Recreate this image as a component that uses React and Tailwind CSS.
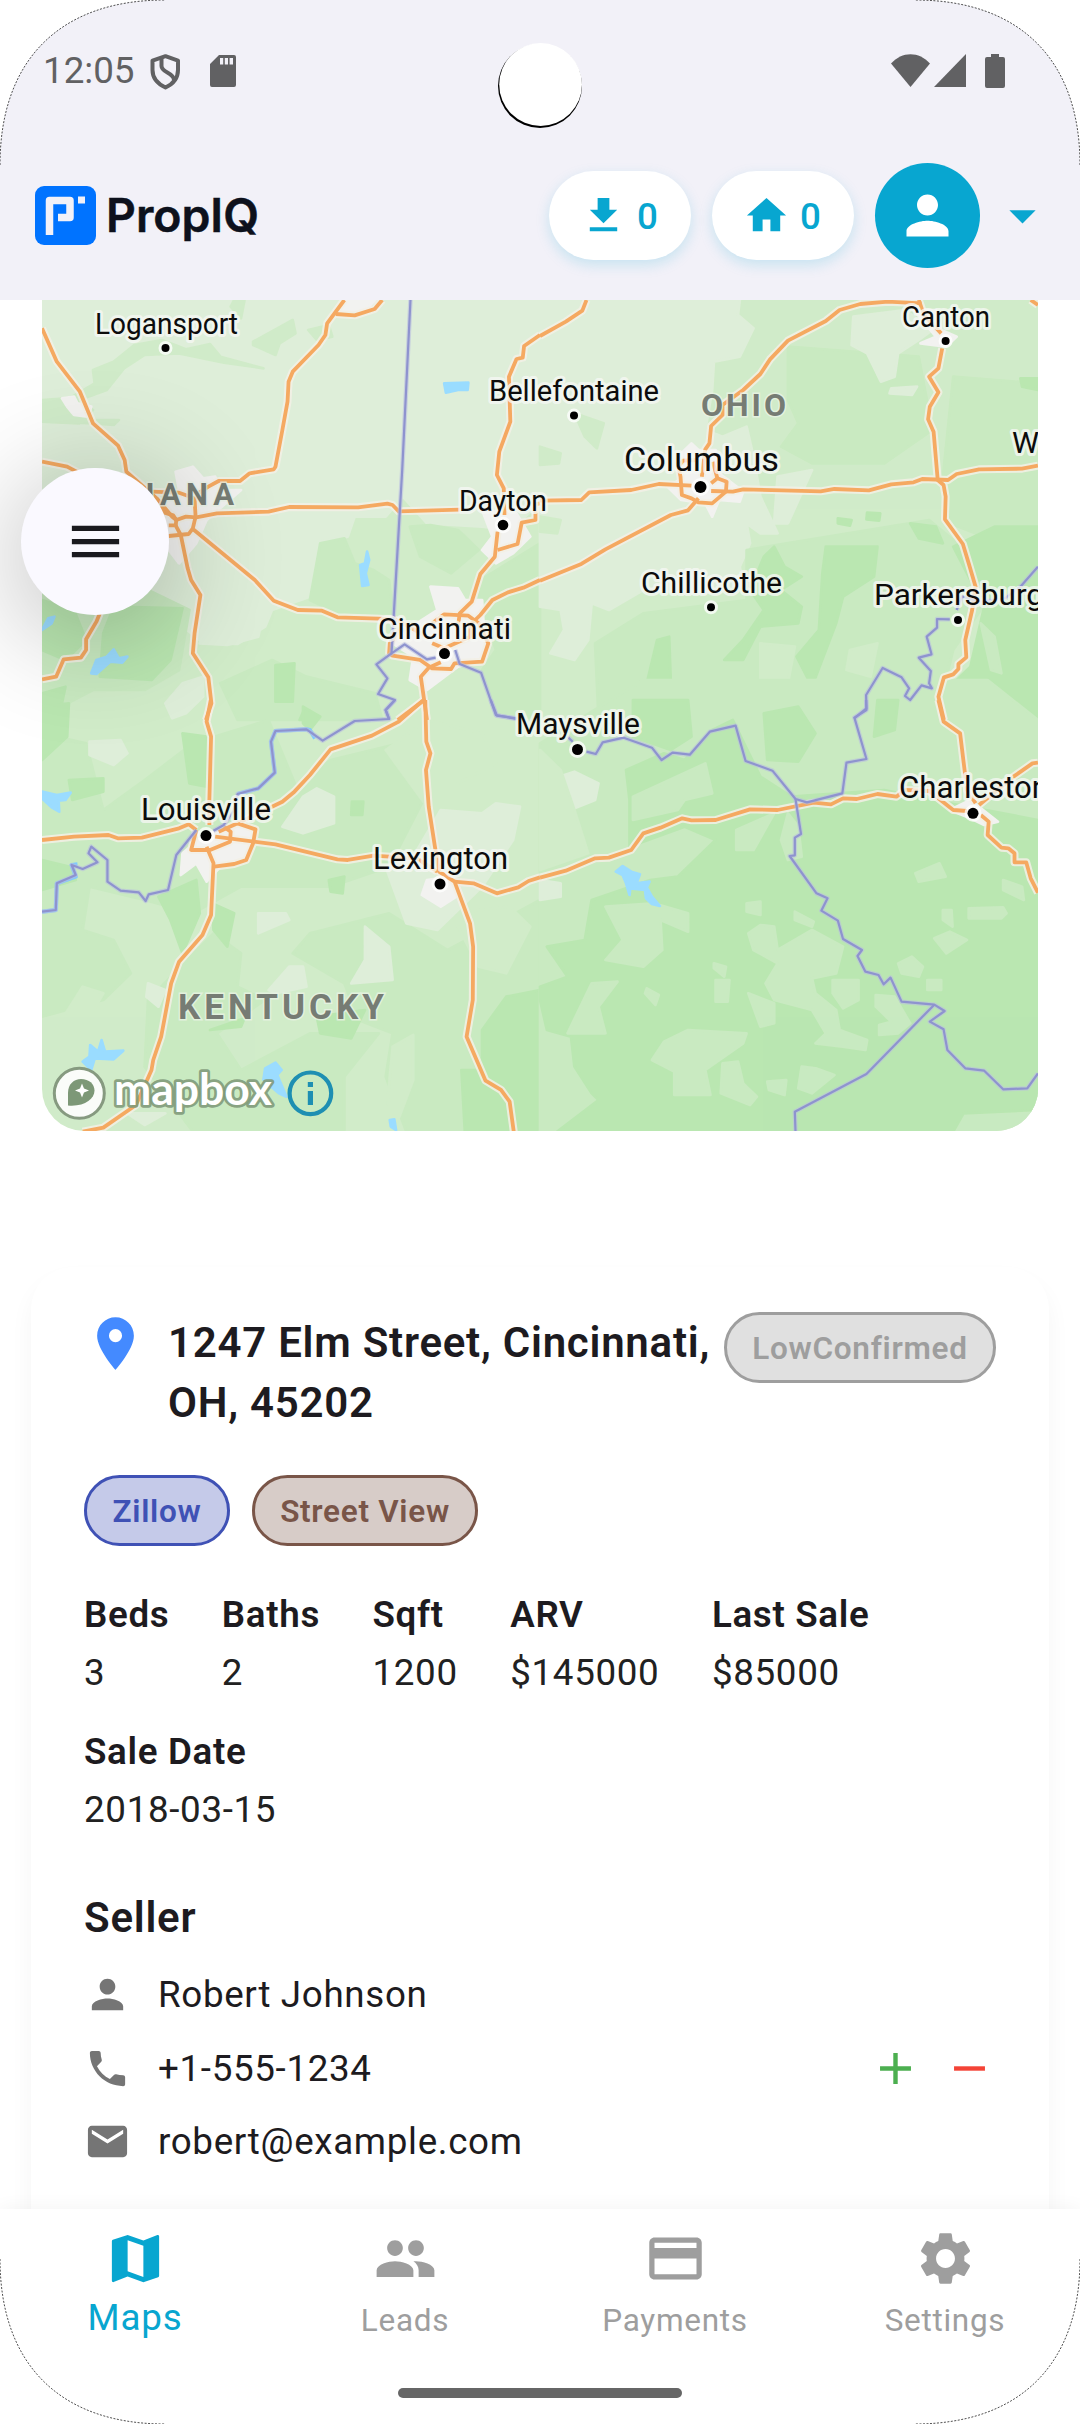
import React from "react";
import {
  MdPerson,
  MdHome,
  MdArrowDropDown,
  MdMenu,
  MdLocationOn,
  MdPhone,
  MdEmail,
  MdAdd,
  MdRemove,
  MdMap,
  MdPeople,
  MdPayment,
  MdSettings,
} from "react-icons/md";

const LIGHT = "#deeed9";
const MID = "#c9eac1";
const DARK = "#bae7b1";
const URBAN = "#f2f2f0";
const WATER = "#9bdcff";

// The map is stored as four tiles, each with its own local grid.
const tiles = [
  {
    transform: "translate(0 290) scale(0.34435 0.33333)",
    land: [
      [LIGHT, "100,20 1568,20 1568,640 1480,720 1400,710 1240,700 1170,620 1120,680 1030,680 1010,740 930,755 900,920 790,960 770,1010 690,1062 590,1060 520,1000 430,880 300,900 100,820"],
      ["#d1ecc9", "270,240 330,215 390,165 470,150 540,178 610,162 640,200 765,235 650,218 520,190 420,195 360,235 310,300 230,330 270,360 230,400 122,395 122,340 210,320 275,280"],
      ["#d1ecc9", "735,155 850,90 858,130 812,160 800,195 735,165"],
      ["#d1ecc9", "680,30 710,30 700,85 670,50"],
      ["#d1ecc9", "895,120 955,105 965,140 920,150"],
      ["#d1ecc9", "122,330 190,325 270,390 345,390 330,405 270,400 150,395"],
      [MID, "930,760 1000,745 1030,820 1085,840 1130,870 1140,970 980,970 900,930"],
      [MID, "1190,710 1250,705 1330,720 1390,780 1310,850 1220,800"],
      [MID, "1380,880 1568,760 1568,1290 1440,1270 1400,1140 1440,1080"],
      [MID, "640,1180 790,1110 890,1160 1090,1210 1110,1290 690,1290"],
      [MID, "122,860 250,900 430,900 550,960 520,1140 420,1200 270,1200 122,1280"],
      [DARK, "330,950 530,955 495,1110 440,1170 290,1160 300,1030"],
      [DARK, "122,930 215,960 250,1050 190,1110 122,1080"],
      [DARK, "800,1125 855,1120 850,1235 800,1235"],
      [DARK, "122,1210 190,1190 170,1290 122,1290"],
      [DARK, "885,1255 920,1290 870,1290"],
      [LIGHT, "480,1240 530,1180 590,1160 590,1220 540,1270 500,1285"],
      [LIGHT, "600,1000 760,990 750,1040 660,1065 580,1060"],
      [URBAN, "180,325 215,320 225,340 265,350 255,380 215,375 195,350"],
      [URBAN, "510,545 560,530 590,565 625,560 640,600 700,600 600,690 570,760 520,820 490,780 450,640 520,600"],
      [URBAN, "1400,660 1500,670 1540,740 1490,790 1440,820 1400,780 1430,740"],
      [URBAN, "1250,890 1330,895 1350,930 1400,930 1410,1100 1330,1130 1240,1200 1190,1170 1200,1100 1140,1060 1210,1000 1270,960"],
      [URBAN, "1000,30 1090,30 1060,62 985,62"],
      [WATER, "1290,280 1360,278 1358,300 1330,300 1295,308"],
      [WATER, "1066,785 1072,810 1062,850 1070,885 1052,888 1046,825 1060,820"],
      [WATER, "265,1150 280,1110 310,1100 330,1078 345,1105 370,1100 355,1118 320,1115 280,1152"],
      [WATER, "122,1020 140,985 158,980 150,1000"],
    ],
    roads: [
      "122,115 165,215 232,305 270,400 343,467 362,510 367,545 455,625 500,680 512,690",
      "122,515 195,530 240,555",
      "1000,30 950,100 945,135 925,165 850,245 838,275 835,335 820,420 800,530 795,538 725,550 697,573 635,573 605,590 575,610",
      "975,72 1030,76 1088,57 1110,30",
      "440,605 520,608 565,625 568,680 560,715 548,732 490,738",
      "490,706 510,706 525,735",
      "465,650 478,668 503,676 512,690 540,680 570,682 630,670 780,665 840,651 1040,652 1125,641 1140,645 1158,664 1335,659",
      "512,690 510,710",
      "560,717 740,870 795,932 865,960 935,962 980,982 1100,986 1150,990 1205,1020 1240,1040",
      "525,735 545,835 555,870 582,915 565,1030 560,1090 605,1162 614,1240 598,1290",
      "290,970 280,995 250,1048 250,1080 235,1103 185,1108 163,1160 122,1168",
      "1568,135 1522,168 1518,203 1500,207 1478,260 1482,395 1450,485 1443,555 1463,595 1465,675",
      "1445,725 1437,800 1395,852 1370,935 1335,970 1330,1010",
      "1568,640 1555,643 1555,690 1515,698 1503,762 1445,780",
      "1568,870 1520,893 1475,907 1430,930 1395,975 1360,1010",
      "1255,1000 1290,973 1360,977 1390,1000 1418,1060 1400,1115 1320,1120 1310,1137 1255,1135 1220,1110 1140,1097 1130,1090 1132,1060 1160,1020",
      "1255,1060 1290,1075 1365,1040 1365,1000",
      "1280,1117 1245,1133 1222,1160 1240,1290",
      "1225,1235 1155,1290",
    ],
    borders: [
      "1192,30 1168,540 1137,1090 1175,1063 1240,1108 1265,1103",
      "1137,1090 1093,1123 1125,1165 1098,1212 1147,1230 1120,1260 1130,1288",
      "1322,1080 1335,1122 1397,1148 1440,1275 1500,1287",
    ],
    rivers: [],
  },
  {
    transform: "translate(540 290) scale(0.34435 0.33333)",
    land: [
      [LIGHT, "0,30 580,30 575,75 620,115 580,200 505,215 500,300 480,420 530,440 600,410 620,500 640,620 690,730 640,730 600,700 610,760 580,830 590,880 480,910 300,900 200,960 150,940 140,1050 100,1110 30,1090 70,1020 60,960 0,950"],
      [MID, "720,170 1100,200 1140,420 1000,520 790,520 700,470 750,400 720,330"],
      [MID, "1200,260 1446,280 1446,730 1290,740 1190,700 1170,560"],
      [MID, "600,780 1130,690 1260,800 1280,960 1200,1080 1150,1290 170,1290 160,1060 300,970 600,930"],
      [LIGHT, "910,80 1060,60 1140,120 1100,150 1040,190 1030,260 990,275 950,190 905,165"],
      [LIGHT, "690,560 790,540 720,700 680,700"],
      [LIGHT, "1020,295 1095,290 1080,315 1015,310"],
      ["#d1ecc9", "100,370 185,400 165,475 130,440"],
      ["#d1ecc9", "0,470 60,490 55,520 0,525"],
      ["#d1ecc9", "0,680 60,690 50,730 0,725"],
      ["#d1ecc9", "640,1060 740,1070 720,1180 640,1200"],
      ["#d1ecc9", "900,1080 980,1060 960,1160 890,1140"],
      [DARK, "650,800 680,770 710,830 760,860 700,900 760,950 750,1000 640,1010 590,1110 535,1110 590,1050 650,960 610,900"],
      [DARK, "830,770 980,770 970,860 880,920 860,1000 790,1190 745,1100 810,1020 820,850"],
      [DARK, "1200,770 1320,710 1446,710 1446,1290 1180,1290 1200,1180 1250,1130 1290,950"],
      [DARK, "340,1050 375,1040 380,1180 320,1240 310,1180"],
      [DARK, "1075,700 1150,710 1170,760 1100,745"],
      [DARK, "865,685 905,690 900,707 865,700"],
      [DARK, "950,668 988,670 985,692 948,688"],
      [DARK, "1395,265 1446,265 1446,300 1400,290"],
      [MID, "1280,1000 1320,1040 1340,1150 1310,1140"],
      [URBAN, "400,500 440,460 460,480 510,480 520,550 590,605 580,635 520,630 500,680 480,640 410,630 370,590 405,570"],
      [URBAN, "1085,60 1150,60 1165,120 1210,140 1180,170 1105,160 1150,140"],
    ],
    roads: [
      "0,138 75,95 123,62 135,30",
      "1108,40 1010,35 930,42 870,60 830,93 720,152 668,208 640,252 590,300 530,345 530,375 497,408 492,460 480,478 470,560",
      "1100,30 1115,75 1165,130",
      "1168,175 1157,235 1130,260 1157,307 1132,350 1127,388 1143,425 1155,570 1172,585 1178,620 1176,688 1228,762 1245,820 1265,890 1255,960 1235,1050 1238,1102 1215,1122 1215,1137 1200,1153 1173,1162 1157,1220 1173,1290",
      "0,632 120,630 143,607 265,600 345,582 440,587",
      "497,603 560,605 590,598 815,604 855,597 955,601 1020,583 1085,577 1110,567 1185,570 1210,552 1275,538 1400,536 1446,527",
      "460,510 415,512 402,530 408,560 412,615 440,625 460,637 500,640 540,605 542,575 515,565 497,580",
      "515,565 502,515",
      "0,872 120,822 190,778 380,675 430,661 460,625",
      "1425,30 1446,45",
    ],
    borders: [
      "1446,830 1395,890 1350,925 1280,935 1225,920 1210,960",
      "1190,988 1153,987 1153,1013 1123,1040 1137,1093 1100,1103 1135,1143 1130,1180 1138,1195 1108,1186 1075,1230 1060,1218 1072,1195 1050,1162 995,1134 947,1215 948,1255 912,1286",
    ],
    rivers: [],
  },
  {
    transform: "translate(0 700) scale(0.34435 0.33333)",
    land: [
      [MID, "122,100 250,130 300,330 420,240 560,130 780,60 860,260 960,180 1200,120 1230,300 1130,500 960,560 700,560 560,640 420,600 260,560 240,690 330,720 380,820 300,900 122,950"],
      [MID, "1130,640 1300,750 1568,600 1568,1295 1180,1295 1120,1130 1140,1000 1040,960 1000,850 850,760 900,700"],
      [MID, "430,900 620,700 700,760 690,860 770,900 630,1000 700,1110 900,1000 1100,1000 1000,1130 1000,1295 560,1295 420,1100"],
      ["#d1ecc9", "1120,150 1240,60 1400,100 1440,190 1330,250 1240,320"],
      ["#d1ecc9", "1310,640 1480,620 1540,680 1470,820 1390,800"],
      ["#d1ecc9", "160,990 240,860 300,880 240,990 180,1005"],
      ["#d1ecc9", "1140,1040 1200,1005 1200,1140 1160,1250 1125,1210"],
      [DARK, "122,20 200,10 195,110 122,180"],
      [DARK, "530,100 600,110 600,260 550,250"],
      [DARK, "200,240 300,235 300,275 210,300"],
      [DARK, "460,590 570,540 580,640 530,760 495,660"],
      [DARK, "615,610 680,640 660,740 620,690"],
      [DARK, "122,480 200,500 220,540 122,570"],
      [DARK, "880,20 930,50 900,90 880,70"],
      [DARK, "1022,305 1055,305 1052,345 1020,345"],
      [DARK, "955,540 1000,530 995,580 960,575"],
      [DARK, "1470,890 1568,870 1568,1295 1350,1295 1340,1110 1400,1110 1400,990"],
      [DARK, "920,950 1060,930 1020,1015 930,1000"],
      [DARK, "610,990 710,955 700,980"],
      [LIGHT, "260,125 350,120 370,160 330,195 260,165"],
      [LIGHT, "880,290 920,265 970,290 970,370 880,400 820,380"],
      [LIGHT, "1120,500 1200,470 1280,330 1400,340 1440,310 1510,320 1490,420 1400,560 1270,690 1180,670"],
      [LIGHT, "1060,680 1130,740 1140,840 1020,850 1060,780"],
      [LIGHT, "750,640 830,640 840,660 750,700"],
      [LIGHT, "780,870 840,800 880,800 890,860 800,880"],
      [LIGHT, "430,850 480,870 460,920 425,890"],
      [LIGHT, "370,1240 480,1240 420,1275"],
      [URBAN, "530,460 600,400 700,380 740,400 720,480 640,500 600,545 570,490 525,525"],
      [URBAN, "1240,540 1310,530 1340,580 1280,620 1225,585"],
      [WATER, "122,275 165,285 205,278 190,300 170,302 172,335 150,322 122,295"],
      [WATER, "240,1085 260,1070 262,1035 285,1055 295,1020 305,1055 358,1052 330,1078 275,1075 265,1110"],
      [WATER, "770,1105 800,1088 818,1110 805,1125 832,1190 810,1180 765,1140"],
      [WATER, "1132,1260 1145,1258 1150,1290 1135,1280"],
    ],
    roads: [
      "612,0 600,65 613,110 608,300 608,375",
      "1230,0 1158,65 1080,107 960,148 900,225 855,275 820,305 740,345 690,370 635,395",
      "1235,0 1238,125 1250,160 1237,210 1245,320 1263,440 1275,515 1320,545 1365,670 1374,740 1373,900 1355,1010 1410,1142 1455,1170 1480,1205 1492,1295",
      "122,420 215,410 315,405 342,415 412,413 520,385 548,373 570,390",
      "570,390 555,450 610,450 668,425 670,395 650,380",
      "690,370 742,388 735,430 715,480 680,492 622,500",
      "600,440 620,490 613,645 588,705 520,785 497,850 468,1010 445,1080 440,1110 395,1215 300,1283 240,1295",
      "625,410 800,433 980,478 1010,480 1085,467 1210,475 1270,515",
      "1320,545 1375,550 1443,580 1505,562 1535,543 1568,532",
    ],
    borders: [
      "1147,0 1120,30 1130,57 1030,63 937,122 890,88 800,93 787,125 798,218 750,265 690,282 680,330 650,375 620,392",
      "570,390 512,465 488,570 432,583 423,603 403,577 350,572 312,545 312,480 265,440 257,460 283,487 240,507 208,495 220,525 165,550 162,630 122,635",
      "1425,0 1443,47 1500,55",
    ],
    rivers: [
      "915,115 900,90 890,88 800,93 787,125 798,218 750,265 690,282",
      "225,493 208,495 220,530 165,550 162,630 122,635",
    ],
  },
  {
    transform: "translate(540 700) scale(0.34435 0.33333)",
    land: [
      [MID, "0,130 300,-60 640,-60 1300,-60 1446,60 1446,1295 0,1295"],
      [DARK, "250,210 360,160 420,180 500,90 560,60 640,230 730,290 1000,270 1190,310 1446,360 1446,1230 1230,1240 1200,1295 50,1295 170,1200 150,1180 100,1100 90,1010 20,990 0,900 0,860 80,830 20,740 130,720 150,600 320,540 400,530 510,420 420,380 260,440 260,300"],
      [DARK, "270,0 430,0 440,110 380,150 270,110"],
      [DARK, "650,40 750,20 800,100 750,185 660,180"],
      [DARK, "980,0 1040,0 1030,90 970,110"],
      [MID, "270,290 480,190 500,280 420,300 400,330 270,360"],
      [MID, "190,620 330,610 430,640 430,695 350,660 355,750 300,800 190,780 240,720"],
      [MID, "605,700 640,675 680,680 690,750 790,690 880,740 860,820 790,835 800,880 860,930 870,990 950,1020 945,1050 880,1040 800,1030 830,1000 790,930 680,900 655,850 690,790 620,750"],
      [MID, "605,880 680,910 680,970 640,980"],
      [MID, "430,990 600,1000 590,1030 480,1110 495,1185 390,1185 390,1115 325,1080 360,1025"],
      [MID, "530,1090 575,1085 590,1150 630,1190 610,1215 525,1180"],
      [MID, "150,850 225,845 170,920 190,1000 80,1000"],
      [MID, "850,840 925,840 925,900 880,925 850,880"],
      [MID, "975,885 1030,890 1075,970 1040,1000 985,1005 985,975 1020,965 975,920"],
      [MID, "1145,715 1190,695 1240,720 1180,760"],
      [MID, "1245,625 1345,622 1355,640 1340,655 1245,655"],
      [MID, "1090,520 1160,490 1178,530 1100,545"],
      [MID, "1170,630 1195,630 1198,680 1170,660"],
      [MID, "1040,790 1080,770 1112,800 1100,830 1050,820"],
      [MID, "1125,840 1165,840 1165,870 1125,870"],
      [MID, "760,1100 800,1105 855,1125 790,1180 750,1165"],
      [MID, "660,1145 715,1140 710,1185 665,1170"],
      [MID, "740,635 795,665 790,680 740,660"],
      [MID, "600,610 640,605 640,645 600,635"],
      [MID, "510,840 550,840 545,905 510,905"],
      [MID, "310,865 345,885 335,915 305,880"],
      [MID, "505,790 540,800 535,830 505,805"],
      [MID, "720,340 750,380 760,470 720,480 700,420"],
      [MID, "570,390 680,340 620,450 570,450"],
      [MID, "1345,540 1400,560 1405,600 1345,570"],
      [LIGHT, "55,230 100,215 170,250 160,300 100,325 65,290"],
      [LIGHT, "0,540 60,550 60,590 0,600"],
      ["#d1ecc9", "0,150 60,210 100,330 140,460 0,510"],
      [URBAN, "1190,330 1250,300 1330,365 1290,375 1250,355"],
      [WATER, "220,515 240,498 265,515 290,523 280,550 318,545 310,562 325,590 348,618 325,612 308,595 305,570 262,565 260,585 250,550 240,525"],
    ],
    roads: [
      "0,533 75,512 160,475 200,473 265,450 300,400 350,383 413,355 440,361 510,360 610,328 690,330 795,308 845,313 880,295 920,297 980,282 1035,290 1060,270 1130,273 1200,330 1240,333",
      "1157,0 1172,65 1220,100 1240,270 1265,310",
      "1446,188 1430,190 1375,230 1275,315",
      "1280,345 1303,365 1300,405 1340,443 1360,445 1378,460 1378,487 1412,487 1425,535 1446,578",
    ],
    borders: [
      "80,110 95,125",
      "135,155 162,162 182,127 243,113 325,143 353,180 385,158 435,164 493,95 568,77 597,183 675,212 742,297 775,307 878,280 890,188 948,177 913,53 948,30 947,0",
      "742,297 758,402 740,413 740,466 725,468 803,580 835,595 817,632 865,662 880,717 935,750 922,768 945,815 983,825 998,853 1018,833 1050,905 1145,914 1175,933 1132,965 1172,988 1183,1050 1235,1105 1290,1112 1345,1168 1415,1165 1446,1120",
      "1145,914 948,1122 740,1235 742,1295",
    ],
    rivers: [],
  },
];

const cities = [
  { name: "Logansport", x: 95, w: 143, y: 334, size: 29.5, dot: [165.5, 348, 4] },
  { name: "Bellefontaine", x: 489, w: 170, y: 401, size: 29.5, dot: [574, 415.6, 4] },
  { name: "Canton", x: 902, w: 88, y: 326.5, size: 29.5, dot: [945.6, 341, 4] },
  { name: "Columbus", x: 624, w: 155, y: 470.5, size: 34, dot: [700.5, 487, 6] },
  { name: "Dayton", x: 459, w: 88, y: 510.5, size: 30, dot: [503, 525, 5.3] },
  { name: "Chillicothe", x: 641, w: 141, y: 592.5, size: 30, dot: [711, 607.3, 4] },
  { name: "Parkersburg", x: 874, w: 170, y: 604.5, size: 30, dot: [958, 620, 4] },
  { name: "W", x: 1012, w: 27, y: 453, size: 30 },
  { name: "Cincinnati", x: 378, w: 133, y: 638.5, size: 30, dot: [444.5, 653.6, 5.5] },
  { name: "Maysville", x: 516, w: 124, y: 734, size: 30, dot: [577.5, 749.5, 5.5] },
  { name: "Louisville", x: 141, w: 130, y: 820, size: 31, dot: [206, 835.6, 5.5] },
  { name: "Lexington", x: 373, w: 135, y: 868.5, size: 30.5, dot: [440, 884, 5.5] },
  { name: "Charleston", x: 899, w: 150, y: 797.6, size: 30.5, dot: [973, 813.3, 5.5] },
];

const states = [
  { name: "INDIANA", x: 79, w: 155, y: 505, size: 31 },
  { name: "OHIO", x: 701, w: 85, y: 416, size: 32 },
  { name: "KENTUCKY", x: 178, w: 206, y: 1019, size: 35 },
];

function TileLines({ kind, stroke, width, opacity = 1 }) {
  return tiles.map((tile, i) => (
    <g key={i} transform={tile.transform} opacity={opacity}>
      {tile[kind].map((points, j) => (
        <polyline
          key={j}
          points={points}
          fill="none"
          stroke={stroke}
          strokeWidth={width}
          strokeLinejoin="round"
          strokeLinecap="butt"
          vectorEffect="non-scaling-stroke"
        />
      ))}
    </g>
  ));
}

function RegionMap() {
  return (
    <svg viewBox="42 300 996 831" className="block h-[831px] w-[996px]">
      <rect x="42" y="300" width="996" height="831" fill="#d1ecc9" />
      {tiles.map((tile, i) => (
        <g key={i} transform={tile.transform}>
          {tile.land.map(([color, points], j) => (
            <polygon key={j} points={points} fill={color} stroke={color} strokeWidth="8" strokeLinejoin="round" />
          ))}
        </g>
      ))}
      <TileLines kind="rivers" stroke="#7fc9ff" width={4} />
      <TileLines kind="roads" stroke="#f4f0e6" width={8} opacity={0.85} />
      <TileLines kind="roads" stroke="#f5a961" width={3.8} />
      <TileLines kind="borders" stroke="#b9bfe0" width={4.5} opacity={0.6} />
      <TileLines kind="borders" stroke="#8e93cf" width={2.2} />
      {states.map((s) => (
        <text
          key={s.name}
          x={s.x}
          y={s.y}
          textLength={s.w}
          fontSize={s.size}
          fontWeight="700"
          fill="#767c74"
          stroke="#eaf3e6"
          strokeWidth="3"
          strokeOpacity="0.8"
          paintOrder="stroke"
        >
          {s.name}
        </text>
      ))}
      {cities.map((c) => (
        <g key={c.name}>
          {c.dot && (
            <circle cx={c.dot[0]} cy={c.dot[1]} r={c.dot[2]} fill="#000" stroke="#fff" strokeWidth="6" strokeOpacity="0.75" paintOrder="stroke" />
          )}
          <text
            x={c.x}
            y={c.y}
            textLength={c.w}
            lengthAdjust="spacingAndGlyphs"
            fontSize={c.size}
            fill="#0c0c0c"
            stroke="#f6f8f4"
            strokeWidth="6"
            strokeOpacity="0.8"
            strokeLinejoin="round"
            paintOrder="stroke"
          >
            {c.name}
          </text>
        </g>
      ))}
      {/* Attribution */}
      <circle cx="79.3" cy="1093.3" r="25" fill="#fafcf9" stroke="#869a80" strokeWidth="3" />
      <path d="M68 1105.500V1093C68 1084 74 1079 81 1079C89 1079 94.500 1084 94.500 1090.500C94.500 1099 84 1107 68 1105.500z" fill="#7d9877" />
      <path d="M82 1083.500l2 5 5 2-5 2-2 5-2-5-5-2 5-2z" fill="#fff" />
      <text
        x="114"
        y="1104.5"
        textLength="158"
        lengthAdjust="spacingAndGlyphs"
        fontSize="44"
        fontWeight="700"
        fontFamily="Lato, sans-serif"
        fill="#fff"
        stroke="#7f9979"
        strokeWidth="5.500"
        strokeOpacity="0.9"
        strokeLinejoin="round"
        paintOrder="stroke"
      >
        mapbox
      </text>
      <circle cx="310.400" cy="1093.300" r="20.800" fill="none" stroke="#1e8fb2" strokeWidth="4.200" />
      <rect x="307.800" y="1082" width="5.200" height="5" fill="#1e8fb2" />
      <rect x="307.800" y="1091" width="5.200" height="14" fill="#1e8fb2" />
    </svg>
  );
}

function StatusBar() {
  return (
    <div className="flex h-[142px] items-start pt-[54px] pr-[75px] pl-[43px] text-[#616163]">
      <span className="w-[107px] text-[36.75px] leading-[34px]">12:05</span>
      <svg viewBox="0 0 31 36" className="h-[36px] w-[31px]" fill="none" stroke="currentColor" strokeWidth="4">
        <path d="M15.500 2.200L28 6.600V16c0 8-5 14-12.500 17.500C8 30 2.500 24 2.500 16V6.600z" strokeLinejoin="round" />
        <path d="M11.500 4v8c0 7 12 6 12.500 14" />
      </svg>
      <svg viewBox="0 0 26 32" className="mt-[1px] ml-[29px] h-[32px] w-[26px]" fill="currentColor">
        <path fillRule="evenodd" d="M9 0h15a2 2 0 0 1 2 2v28a2 2 0 0 1-2 2H2a2 2 0 0 1-2-2V9zM10 3v6.500h3.200V3zM14.800 3v6.500H18V3zM19.600 3v6.500H23V3z" />
      </svg>
      <svg viewBox="0 0 114 34" className="ml-auto h-[34px] w-[114px]" fill="currentColor">
        <path d="M0 9.500C11-3 28-3 39 9.500L19.500 33z" />
        <path d="M75 0v33H43z" />
        <path d="M100 0h8v3h4a2 2 0 0 1 2 2v27a2 2 0 0 1-2 2H96a2 2 0 0 1-2-2V5a2 2 0 0 1 2-2h4z" />
      </svg>
    </div>
  );
}

function CountPill({ children }) {
  return (
    <div className="flex h-[89px] w-[142px] items-center gap-[10px] rounded-full bg-white pl-[31px] text-[#08a6d0] shadow-[0_5px_14px_rgba(8,166,208,0.18)]">
      {children}
      <span className="pt-[2px] text-[36.75px] font-medium">0</span>
    </div>
  );
}

function Header() {
  return (
    <header className="h-[300px] bg-[#f2f1f8]">
      <StatusBar />
      <div className="flex h-[147px] items-center pr-[26px] pl-[35px]">
        <svg viewBox="0 0 61 59" className="h-[59px] w-[61px]">
          <rect width="61" height="59" rx="9" fill="#0073ff" />
          <path d="M14.500 49V14.500h20.500v17H23" fill="none" stroke="#f2f1f8" strokeWidth="7.500" strokeLinejoin="round" />
          <rect x="43" y="10.500" width="7" height="7" fill="#f2f1f8" />
        </svg>
        <svg viewBox="0 0 156 59" className="ml-[9px] h-[59px] w-[156px]">
          <text x="1" y="45.500" textLength="153" lengthAdjust="spacingAndGlyphs" fontSize="46" fontWeight="600" fontFamily="Inter, sans-serif" fill="#0d111c" stroke="#0d111c" strokeWidth="0.500">
            PropIQ
          </text>
        </svg>
        <div className="ml-auto flex items-center gap-[21px]">
          <CountPill>
            <svg viewBox="0 0 24 24" className="h-[47px] w-[47px]" fill="currentColor">
              <path d="M19 9h-4V3H9v6H5l7 7 7-7zM5 18v2h14v-2H5z" />
            </svg>
          </CountPill>
          <CountPill>
            <MdHome className="h-[47px] w-[47px]" />
          </CountPill>
          <div className="flex h-[105px] w-[105px] items-center justify-center rounded-full bg-[#08a6d0] text-white">
            <MdPerson className="h-[63px] w-[63px]" />
          </div>
        </div>
        <MdArrowDropDown className="ml-[11px] h-[63px] w-[63px] text-[#08a6d0]" />
      </div>
    </header>
  );
}

function Chip({ className, children }) {
  return (
    <span
      className={
        "flex h-[71px] shrink-0 items-center justify-center rounded-full border-[3px] pt-[2px] text-[31.5px] font-semibold tracking-[0.7px] whitespace-nowrap " +
        className
      }
    >
      {children}
    </span>
  );
}

function Stat({ label, value }) {
  return (
    <div className="leading-[52.5px] tracking-[0.66px]">
      <div className="font-semibold text-[#1d1b20]">{label}</div>
      <div className="mt-[5px] text-[#212121]">{value}</div>
    </div>
  );
}

function PropertyCard() {
  return (
    <section className="mx-[31px] mt-[136px] h-[1100px] rounded-[42px] bg-white pt-[45px] pr-[53px] pl-[53px] text-[36.75px] text-[#1d1b20] shadow-[0_14px_24px_rgba(0,0,0,0.045)]">
      <div className="flex items-start">
        <MdLocationOn className="h-[63px] w-[63px] shrink-0 text-[#448aff]" />
        <h1 className="ml-[21px] flex-1 pt-[1px] text-[42px] leading-[60px] font-semibold tracking-[0.75px] whitespace-nowrap">
          1247 Elm Street, Cincinnati,
          <br />
          OH, 45202
        </h1>
        <Chip className="w-[272px] border-[#9e9e9e] bg-[#e0e0e0] text-[#9e9e9e]">LowConfirmed</Chip>
      </div>
      <div className="mt-[42px] flex gap-[22px]">
        <Chip className="w-[146px] border-[#3f51b5] bg-[#c5cae9] text-[#3f51b5]">Zillow</Chip>
        <Chip className="w-[226px] border-[#795548] bg-[#d7ccc8] text-[#795548]">Street View</Chip>
      </div>
      <div className="mt-[43px] flex flex-wrap gap-x-[52.5px] gap-y-[27px]">
        <Stat label="Beds" value="3" />
        <Stat label="Baths" value="2" />
        <Stat label="Sqft" value="1200" />
        <Stat label="ARV" value="$145000" />
        <Stat label="Last Sale" value="$85000" />
        <Stat label="Sale Date" value="2018-03-15" />
      </div>
      <h2 className="mt-[50px] text-[42px] leading-[63px] font-semibold tracking-[0.75px]">Seller</h2>
      <div className="mt-[9px] tracking-[0.66px]">
        <div className="flex h-[73.5px] items-center">
          <MdPerson className="h-[47px] w-[47px] text-[#757575]" />
          <span className="ml-[27px]">Robert Johnson</span>
        </div>
        <div className="flex h-[73.5px] items-center">
          <MdPhone className="h-[47px] w-[47px] text-[#757575]" />
          <span className="ml-[27px]">+1-555-1234</span>
          <MdAdd className="ml-auto h-[53px] w-[53px] text-[#4caf50]" />
          <MdRemove className="ml-[21px] h-[53px] w-[53px] text-[#f44336]" />
        </div>
        <div className="flex h-[73.5px] items-center">
          <MdEmail className="h-[47px] w-[47px] text-[#757575]" />
          <span className="ml-[27px]">robert@example.com</span>
        </div>
      </div>
    </section>
  );
}

function NavItem({ icon: Icon, label, active }) {
  return (
    <div className={"flex flex-1 flex-col items-center pt-[18px] " + (active ? "text-[#08a6d0]" : "text-[#9e9e9e]")}>
      <Icon className="h-[63px] w-[63px]" />
      <span className={active ? "text-[36.75px] leading-[56px] tracking-[0.8px]" : "text-[31.5px] leading-[62px] tracking-[0.7px]"}>{label}</span>
    </div>
  );
}

function BottomNav() {
  return (
    <nav className="relative flex h-[215px] flex-col items-center bg-white shadow-[0_-3px_16px_rgba(0,0,0,0.04)]">
      <div className="flex w-full">
        <NavItem icon={MdMap} label="Maps" active />
        <NavItem icon={MdPeople} label="Leads" />
        <NavItem icon={MdPayment} label="Payments" />
        <NavItem icon={MdSettings} label="Settings" />
      </div>
      <div className="mt-auto mb-[26px] h-[10px] w-[284px] rounded-full bg-[#666666]" />
    </nav>
  );
}

const corners = [
  "",
  "translate(1080 0) scale(-1 1)",
  "translate(0 2424) scale(1 -1)",
  "translate(1080 2424) scale(-1 -1)",
];

function DeviceEdge() {
  return (
    <svg viewBox="0 0 1080 2424" className="pointer-events-none absolute inset-0 h-[2424px] w-[1080px]">
      {corners.map((transform, i) => (
        <g key={i} transform={transform}>
          <path d="M0 0V165C0 60 60 0 165 0z" fill="#fff" />
          <path d="M0 165C0 60 60 0 165 0" fill="none" stroke="#222" strokeWidth="0.800" strokeDasharray="2 1.500" />
        </g>
      ))}
      <circle cx="540" cy="86" r="42" fill="#000" />
      <circle cx="540.600" cy="84.500" r="41.400" fill="#fff" />
    </svg>
  );
}

export default function App() {
  return (
    <div className="relative flex h-[2424px] w-[1080px] flex-col overflow-hidden bg-white font-[Roboto,sans-serif]">
      <Header />
      <main className="relative min-h-0 flex-1 overflow-hidden">
        <div className="mx-[42px] overflow-hidden rounded-b-[42px]">
          <RegionMap />
        </div>
        <button className="absolute top-[168px] left-[21px] flex h-[147px] w-[148px] items-center justify-center rounded-full bg-[#faf9ff] text-[#1a1a1f] shadow-[0_16px_120px_rgba(0,0,0,0.31)]">
          <MdMenu className="h-[63px] w-[63px]" />
        </button>
        <PropertyCard />
      </main>
      <BottomNav />
      <DeviceEdge />
    </div>
  );
}
